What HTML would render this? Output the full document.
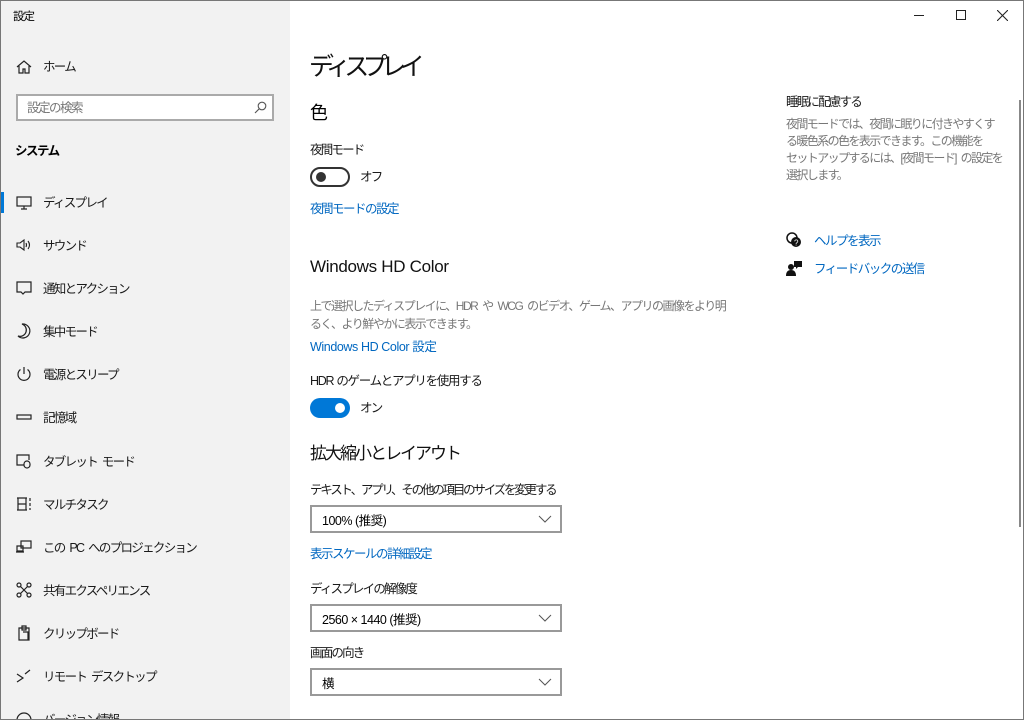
<!DOCTYPE html>
<html><head><meta charset="utf-8"><style>
*{margin:0;padding:0;box-sizing:border-box}
html,body{width:1024px;height:720px;overflow:hidden}
body{background:#fff;font-family:"Liberation Sans","Noto Sans CJK JP",sans-serif;color:#000;position:relative}
.a{position:absolute;white-space:nowrap}
#side{position:absolute;left:0;top:0;width:290px;height:720px;background:#f2f2f2}
.nav{position:absolute;left:43px;font-size:12.5px;letter-spacing:-1.7px;word-spacing:3px;color:#1a1a1a;margin-top:-2px}
.ic{position:absolute;left:15px;width:18px;height:18px}
.lnk{color:#0067c0;font-size:12.5px;letter-spacing:-1.5px;word-spacing:3px;margin-top:-2px}
.t13{font-size:12.5px;color:#1a1a1a;letter-spacing:-1.8px;word-spacing:3px;margin-top:-2px}
.dd{position:absolute;left:310px;width:252px;height:28px;border:2px solid #999;background:#fff;font-size:12.5px;letter-spacing:-0.5px;padding:3px 0 0 10px}
.dd svg{position:absolute;right:8px;top:8px}
</style></head><body>
<div id="side"></div>
<div class="a" style="left:13px;top:8px;font-size:11.5px;letter-spacing:-1px">設定</div>
<svg class="ic" style="top:58px" viewBox="0 0 18 18" fill="none" stroke="#222" stroke-width="1.2"><path d="M2 9L9 3l7 6M4 8v7h4v-4h2v4h4V8"/></svg>
<div class="nav" style="top:58px">ホーム</div>
<div class="a" style="left:16px;top:94px;width:258px;height:27px;border:2px solid #aaa;background:#fff"></div>
<div class="a" style="left:27px;top:97px;font-size:12.5px;letter-spacing:-1.5px;color:#777">設定の検索</div>
<svg class="a" style="left:254px;top:101px" width="13" height="13" viewBox="0 0 13 13" fill="none" stroke="#555" stroke-width="1.1"><circle cx="8" cy="5" r="3.8"/><path d="M5.3 7.7L1 12"/></svg>
<div class="a" style="left:15px;top:140px;font-size:12.5px;letter-spacing:-1.5px;font-weight:bold">システム</div>
<div class="a" style="left:0;top:192px;width:4px;height:21px;background:#0078d7"></div>
<svg class="ic" style="top:193px" viewBox="0 0 18 18" fill="none" stroke="#222" stroke-width="1.2"><rect x="2" y="4" width="14" height="9"/><path d="M9 13v3M6 16h6"/></svg>
<div class="nav" style="top:194px">ディスプレイ</div>
<svg class="ic" style="top:236px" viewBox="0 0 18 18" fill="none" stroke="#222" stroke-width="1.1"><path d="M2 7h3l4-3v10l-4-3H2zM11 7q1 2 0 4M13 5q3 4 0 8"/></svg>
<div class="nav" style="top:237px">サウンド</div>
<svg class="ic" style="top:279px" viewBox="0 0 18 18" fill="none" stroke="#222" stroke-width="1.2"><path d="M2 3h14v10h-6l-2 2-2-2H2z"/></svg>
<div class="nav" style="top:280px">通知とアクション</div>
<svg class="ic" style="top:322px" viewBox="0 0 18 18" fill="none" stroke="#222" stroke-width="1.2"><path d="M7 2a7 7 0 1 1-4 12A6 6 0 0 0 7 2z"/></svg>
<div class="nav" style="top:323px">集中モード</div>
<svg class="ic" style="top:365px" viewBox="0 0 18 18" fill="none" stroke="#222" stroke-width="1.2"><path d="M9 2v7M5.5 4.5a6 6 0 1 0 7 0"/></svg>
<div class="nav" style="top:366px">電源とスリープ</div>
<svg class="ic" style="top:408px" viewBox="0 0 18 18" fill="none" stroke="#222" stroke-width="1.2"><rect x="2" y="7" width="14" height="4"/></svg>
<div class="nav" style="top:409px">記憶域</div>
<svg class="ic" style="top:452px" viewBox="0 0 18 18" fill="none" stroke="#222" stroke-width="1.2"><path d="M9 13H2V3h12v5"/><rect x="9" y="9" width="6" height="7" rx="3"/></svg>
<div class="nav" style="top:453px">タブレット モード</div>
<svg class="ic" style="top:495px" viewBox="0 0 18 18" fill="none" stroke="#222" stroke-width="1.2"><path d="M2 3h10M2 15h10M3 3v12M11 3v12M3 9h8M15 3v3M15 8v3M15 13v2"/></svg>
<div class="nav" style="top:496px">マルチタスク</div>
<svg class="ic" style="top:538px" viewBox="0 0 18 18" fill="none" stroke="#222" stroke-width="1.2"><rect x="6" y="3" width="10" height="7"/><path d="M2 8h6v5H2zM1 14h8"/></svg>
<div class="nav" style="top:539px">この PC へのプロジェクション</div>
<svg class="ic" style="top:581px" viewBox="0 0 18 18" fill="none" stroke="#222" stroke-width="1.2"><circle cx="4" cy="4" r="2"/><circle cx="14" cy="4" r="2"/><circle cx="4" cy="14" r="2"/><circle cx="14" cy="14" r="2"/><path d="M5.5 5.5l7 7M12.5 5.5l-7 7"/></svg>
<div class="nav" style="top:582px">共有エクスペリエンス</div>
<svg class="ic" style="top:624px" viewBox="0 0 18 18" fill="none" stroke="#222" stroke-width="1.2"><path d="M4 4h10v12H4zM7 2h4v4H7zM8 8h5v8"/></svg>
<div class="nav" style="top:625px">クリップボード</div>
<svg class="ic" style="top:667px" viewBox="0 0 18 18" fill="none" stroke="#222" stroke-width="1.2"><path d="M2 7l6 4-6 4M10 7l5-4"/></svg>
<div class="nav" style="top:668px">リモート デスクトップ</div>
<div class="nav" style="top:711px">バージョン情報</div>
<svg class="ic" style="top:711px" viewBox="0 0 18 18" fill="none" stroke="#222" stroke-width="1.2"><circle cx="9" cy="9" r="7"/></svg>

<div class="a" style="left:914px;top:15px;width:10px;height:1px;background:#222"></div>
<div class="a" style="left:956px;top:10px;width:10px;height:10px;border:1px solid #222"></div>
<svg class="a" style="left:997px;top:10px" width="11" height="11" viewBox="0 0 11 11" stroke="#222" stroke-width="1.1"><path d="M0 0l11 11M11 0L0 11"/></svg>

<div class="a" style="left:309px;top:47px;font-size:25px;letter-spacing:-6.5px;color:#111">ディスプレイ</div>
<div class="a" style="left:310px;top:99px;font-size:18px">色</div>
<div class="a t13" style="left:310px;top:141px">夜間モード</div>
<div class="a" style="left:310px;top:167px;width:40px;height:20px;border:2px solid #333;border-radius:10px"></div>
<div class="a" style="left:316px;top:172px;width:10px;height:10px;border-radius:5px;background:#333"></div>
<div class="a t13" style="left:360px;top:168px">オフ</div>
<div class="a lnk" style="left:310px;top:200px">夜間モードの設定</div>
<div class="a" style="left:310px;top:257px;font-size:17px;color:#111;letter-spacing:-0.3px">Windows HD Color</div>
<div class="a" style="left:310px;top:297px;font-size:12px;letter-spacing:-1.5px;word-spacing:3px;line-height:18px;color:#777">上で選択したディスプレイに、HDR や WCG のビデオ、ゲーム、アプリの画像をより明<br>るく、より鮮やかに表示できます。</div>
<div class="a lnk" style="left:310px;top:338px;letter-spacing:-0.4px;word-spacing:0">Windows HD Color 設定</div>
<div class="a t13" style="left:310px;top:372px;letter-spacing:-1.3px;word-spacing:1px">HDR のゲームとアプリを使用する</div>
<div class="a" style="left:310px;top:398px;width:40px;height:20px;background:#0078d7;border-radius:10px"></div>
<div class="a" style="left:335px;top:403px;width:10px;height:10px;border-radius:5px;background:#fff"></div>
<div class="a t13" style="left:360px;top:399px">オン</div>
<div class="a" style="left:310px;top:439px;font-size:17px;letter-spacing:-2px;color:#111">拡大縮小とレイアウト</div>
<div class="a t13" style="left:310px;top:481px;letter-spacing:-2.2px">テキスト、アプリ、その他の項目のサイズを変更する</div>
<div class="dd" style="top:505px">100% (推奨)<svg width="14" height="8" viewBox="0 0 14 8" fill="none" stroke="#555"><path d="M1 1l6 6 6-6"/></svg></div>
<div class="a lnk" style="left:310px;top:545px">表示スケールの詳細設定</div>
<div class="a t13" style="left:310px;top:580px">ディスプレイの解像度</div>
<div class="dd" style="top:604px">2560 × 1440 (推奨)<svg width="14" height="8" viewBox="0 0 14 8" fill="none" stroke="#555"><path d="M1 1l6 6 6-6"/></svg></div>
<div class="a t13" style="left:310px;top:644px">画面の向き</div>
<div class="dd" style="top:668px">横<svg width="14" height="8" viewBox="0 0 14 8" fill="none" stroke="#555"><path d="M1 1l6 6 6-6"/></svg></div>

<div class="a t13" style="left:786px;top:93px">睡眠に配慮する</div>
<div class="a" style="left:786px;top:116px;font-size:12px;letter-spacing:-1.6px;word-spacing:3px;line-height:17px;color:#777">夜間モードでは、夜間に眠りに付きやすくす<br>る暖色系の色を表示できます。この機能を<br>セットアップするには、[夜間モード] の設定を<br>選択します。</div>
<svg class="a" style="left:786px;top:232px" width="16" height="16" viewBox="0 0 16 16"><circle cx="6" cy="6" r="5" fill="none" stroke="#111" stroke-width="1.5"/><circle cx="10" cy="10" r="5" fill="#111"/><text x="8" y="13.5" font-size="8" fill="#fff" font-family="Liberation Sans">?</text></svg>
<div class="a lnk" style="left:814px;top:232px">ヘルプを表示</div>
<svg class="a" style="left:786px;top:260px" width="16" height="16" viewBox="0 0 16 16" fill="#111"><circle cx="5" cy="7" r="3"/><path d="M0 16q0-6 5-6t5 6z"/><path d="M8 1h8v6h-4l-2 2V7H8z"/></svg>
<div class="a lnk" style="left:814px;top:260px">フィードバックの送信</div>

<div class="a" style="left:1019px;top:100px;width:2px;height:427px;background:#888"></div>
<div class="a" style="left:0;top:0;width:1024px;height:720px;border:1px solid #777"></div>
</body></html>
